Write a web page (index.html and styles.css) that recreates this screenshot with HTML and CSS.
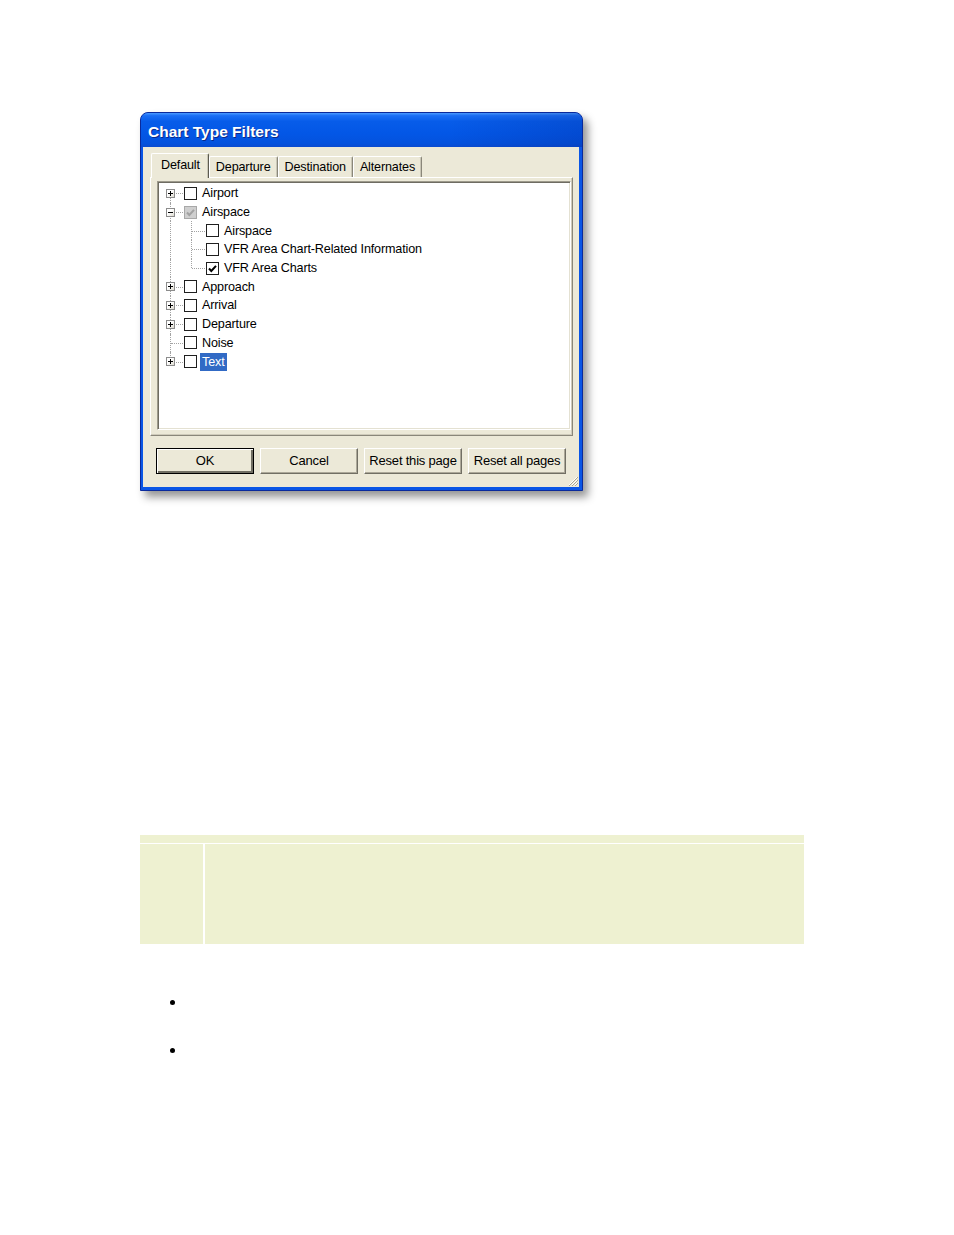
FILE: index.html
```html
<!DOCTYPE html>
<html>
<head>
<meta charset="utf-8">
<title>Chart Type Filters</title>
<link rel="stylesheet" href="styles.css">
</head>
<body>
<div class="page">
  <div class="window">
    <div class="titlebar">Chart Type Filters</div>
    <div class="client">
      <div class="tabs">
        <div class="tab sel">Default</div>
        <div class="tab">Departure</div>
        <div class="tab">Destination</div>
        <div class="tab">Alternates</div>
      </div>
      <div class="panel">
        <div class="tree">
          <div class="row">
            <span class="gut"><i class="v first"></i><i class="h"></i><b class="exp plus"></b></span>
            <span class="cb"></span><span class="lbl">Airport</span>
          </div>
          <div class="row">
            <span class="gut"><i class="v"></i><i class="h"></i><b class="exp minus"></b></span>
            <span class="cb dis"><svg viewBox="0 0 11 11"><path d="M2 5.5 L4.3 8 L9 2.8" /></svg></span><span class="lbl">Airspace</span>
          </div>
          <div class="row">
            <span class="gut"><i class="v"></i></span>
            <span class="gut2"><i class="v"></i><i class="h"></i></span>
            <span class="cb"></span><span class="lbl">Airspace</span>
          </div>
          <div class="row">
            <span class="gut"><i class="v"></i></span>
            <span class="gut2"><i class="v"></i><i class="h"></i></span>
            <span class="cb"></span><span class="lbl">VFR Area Chart-Related Information</span>
          </div>
          <div class="row">
            <span class="gut"><i class="v"></i></span>
            <span class="gut2"><i class="v last"></i><i class="h"></i></span>
            <span class="cb on"><svg viewBox="0 0 11 11"><path d="M2 5.5 L4.3 8 L9 2.8" /></svg></span><span class="lbl">VFR Area Charts</span>
          </div>
          <div class="row">
            <span class="gut"><i class="v"></i><i class="h"></i><b class="exp plus"></b></span>
            <span class="cb"></span><span class="lbl">Approach</span>
          </div>
          <div class="row">
            <span class="gut"><i class="v"></i><i class="h"></i><b class="exp plus"></b></span>
            <span class="cb"></span><span class="lbl">Arrival</span>
          </div>
          <div class="row">
            <span class="gut"><i class="v"></i><i class="h"></i><b class="exp plus"></b></span>
            <span class="cb"></span><span class="lbl">Departure</span>
          </div>
          <div class="row">
            <span class="gut"><i class="v"></i><i class="h full"></i></span>
            <span class="cb"></span><span class="lbl">Noise</span>
          </div>
          <div class="row">
            <span class="gut"><i class="v last"></i><i class="h"></i><b class="exp plus"></b></span>
            <span class="cb"></span><span class="lbl hl">Text</span>
          </div>
        </div>
      </div>
      <div class="buttons">
        <button class="btn def">OK</button>
        <button class="btn">Cancel</button>
        <button class="btn">Reset this page</button>
        <button class="btn">Reset all pages</button>
      </div>
      <svg class="grip" viewBox="0 0 12 12" width="12" height="12">
        <path d="M11 3 L3 11 M11 6 L6 11 M11 9 L9 11" stroke="#fff" stroke-width="1"/>
        <path d="M12 3 L3 12 M12 6 L6 12 M12 9 L9 12" stroke="#a9a592" stroke-width="1"/>
      </svg>
    </div>
  </div>

  <div class="notes">
    <div class="nhead"></div>
    <div class="ncell a"></div>
    <div class="ncell b"></div>
  </div>

  <ul class="bullets">
    <li>&nbsp;</li>
    <li>&nbsp;</li>
  </ul>
</div>
</body>
</html>
```

FILE: styles.css
```css
html, body {
  margin: 0;
  padding: 0;
  background: #ffffff;
}
body {
  font-family: "Liberation Sans", Arial, sans-serif;
}
.page {
  padding: 112px 0 0 140px;
}

/* ---------- window ---------- */
.window {
  width: 443px;
  height: 379px;
  box-sizing: border-box;
  border: 1px solid #0a2a9c;
  border-radius: 8px 8px 0 0;
  background: #0a56e6;
  padding: 0 3px 3px 2px;
  display: flex;
  flex-direction: column;
  box-shadow: 5px 6px 8px rgba(0, 0, 0, 0.42);
}
.titlebar {
  height: 34px;
  flex: none;
  margin: 0 -3px 0 -2px;
  padding-left: 7px;
  border-radius: 7px 7px 0 0;
  background:
    linear-gradient(to right, rgba(0,0,0,0) 70%, rgba(0,20,120,0.18) 100%),
    linear-gradient(to bottom, #4a9bff 0%, #1a6ef5 8%, #075ce9 25%, #0357e6 60%, #0452dd 90%, #0a4bd0 100%);
  color: #ffffff;
  font-weight: bold;
  font-size: 15.5px;
  line-height: 38px;
  text-shadow: 1px 1px 0 #0b2a8a;
}
.client {
  flex: 1;
  position: relative;
  background: #ece9d8;
  padding-top: 6px;
  font-size: 12.6px;
  letter-spacing: -0.15px;
  color: #000;
}

/* ---------- tabs ---------- */
.tabs {
  display: flex;
  align-items: flex-end;
  height: 24px;
  margin-left: 8px;
  position: relative;
  z-index: 2;
}
.tab {
  height: 21px;
  box-sizing: border-box;
  padding: 0 6px 0 6px;
  line-height: 20px;
  border-left: 1px solid #ffffff;
  border-top: 1px solid #ffffff;
  border-right: 1px solid #8a877a;
  box-shadow: inset -1px 0 0 #c9c6b6;
  border-radius: 2px 2px 0 0;
  background: #ece9d8;
}
.tab.sel {
  height: 25px;
  margin-bottom: -1px;
  padding: 0 8px 0 9px;
  line-height: 22px;
  border-right-color: #5c5a50;
}

/* ---------- panel / tree ---------- */
.panel {
  margin-left: 7px;
  width: 423px;
  height: 259px;
  box-sizing: border-box;
  border-top: 1px solid #ffffff;
  border-left: 1px solid #ffffff;
  border-right: 1px solid #8a877a;
  border-bottom: 1px solid #8a877a;
  box-shadow: inset -1px -1px 0 #cfcbbb;
  padding: 3px 0 0 6px;
  position: relative;
  z-index: 1;
}
.tree {
  width: 414px;
  height: 249px;
  box-sizing: border-box;
  border-top: 1px solid #9d9a8c;
  border-left: 1px solid #9d9a8c;
  border-right: 1px solid #ffffff;
  border-bottom: 1px solid #ffffff;
  box-shadow: inset 1px 1px 0 #6e6c62, inset -1px -1px 0 #e4e1d2;
  background: #ffffff;
  padding: 2px 0 0 2px;
}
.row {
  display: flex;
  align-items: center;
  height: 18.7px;
  white-space: nowrap;
}
.gut, .gut2 {
  position: relative;
  align-self: stretch;
  flex: none;
}
.gut { width: 24px; }
.gut2 { width: 22px; }
.v {
  position: absolute;
  left: 10px;
  top: 0;
  bottom: 0;
  border-left: 1px dotted #a3a3a3;
}
.gut2 .v { left: 7px; }
.v.first { top: 50%; }
.v.last { bottom: 50%; }
.h {
  position: absolute;
  left: 11px;
  right: 1px;
  top: 50%;
  border-top: 1px dotted #a3a3a3;
}
.gut2 .h { left: 8px; }
.exp {
  position: absolute;
  left: 6px;
  top: calc(50% - 4.5px);
  width: 9px;
  height: 9px;
  box-sizing: border-box;
  border: 1px solid #8c8c8c;
  background: linear-gradient(135deg, #ffffff 40%, #dedbd0 100%);
  z-index: 1;
}
.exp::before {
  content: "";
  position: absolute;
  left: 1px;
  top: 3px;
  width: 5px;
  height: 1px;
  background: #000;
}
.exp.plus::after {
  content: "";
  position: absolute;
  left: 3px;
  top: 1px;
  width: 1px;
  height: 5px;
  background: #000;
}
.cb {
  flex: none;
  width: 13px;
  height: 13px;
  box-sizing: border-box;
  border: 1px solid #1f1f1f;
  background: #ffffff;
  display: flex;
  align-items: center;
  justify-content: center;
}
.cb svg {
  width: 11px;
  height: 11px;
}
.cb svg path {
  fill: none;
  stroke-width: 2;
}
.cb.on svg path { stroke: #000; }
.cb.dis {
  border-color: #a8a8a8;
  background: #cfcfcf;
}
.cb.dis svg path { stroke: #a2a2a2; }
.lbl {
  margin-left: 3px;
  padding: 1px 2px;
  line-height: 16px;
}
.lbl.hl {
  background: #316ac5;
  color: #ffffff;
}

/* ---------- buttons ---------- */
.buttons {
  display: flex;
  gap: 6px;
  margin: 12px 0 0 13px;
}
.btn {
  width: 98px;
  height: 26px;
  box-sizing: border-box;
  padding: 0 0 2px 0;
  font-family: "Liberation Sans", Arial, sans-serif;
  font-size: 13px;
  letter-spacing: -0.2px;
  color: #000;
  background: #ece9d8;
  border-top: 1px solid #ffffff;
  border-left: 1px solid #ffffff;
  border-right: 1px solid #716f64;
  border-bottom: 1px solid #716f64;
  box-shadow: inset -1px -1px 0 #aca899;
}
.btn.def {
  border: 1px solid #000;
  box-shadow: inset 1px 1px 0 #ffffff, inset -2px -2px 0 #716f64;
}
.grip {
  position: absolute;
  right: 1px;
  bottom: 1px;
}

/* ---------- notes table ---------- */
.notes {
  margin-top: 344px;
  width: 664px;
  display: grid;
  grid-template-columns: 63px 1fr;
  grid-template-rows: 8px 100px;
  column-gap: 2px;
  row-gap: 1px;
}
.nhead {
  grid-column: 1 / 3;
  background: #eef1d1;
}
.ncell {
  background: #eef1d1;
}

/* ---------- bullets ---------- */
.bullets {
  margin: 49px 0 0 0;
  padding-left: 46px;
  font-family: "Liberation Serif", serif;
  font-size: 16px;
  line-height: 18px;
}
.bullets li {
  height: 48px;
}
```
